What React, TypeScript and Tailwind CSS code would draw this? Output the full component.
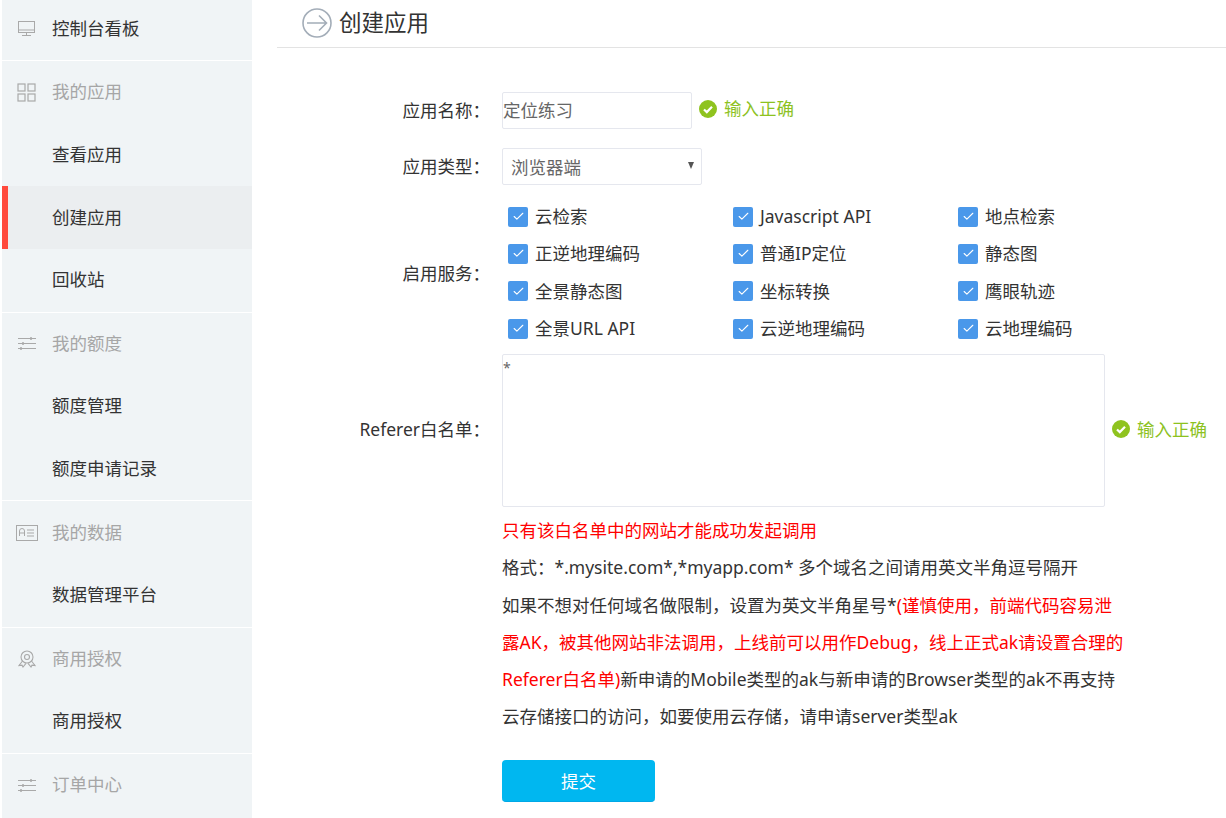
import { Check } from "lucide-react";
import type { ReactNode } from "react";

const FONT = "font-['Noto_Sans','Noto_Sans_CJK_SC',sans-serif]";

const MonitorIcon = () => (
  <svg width="18" height="16" viewBox="0 0 18 16" fill="none" stroke="#a9a9a9" strokeWidth="1">
    <rect x="0.5" y="0.5" width="16" height="11" />
    <path d="M1 9h15M4 14.5h9M8.5 12v2" />
  </svg>
);

const GridIcon = () => (
  <svg width="20" height="19" viewBox="0 0 20 19" fill="none" stroke="#a9a9a9" strokeWidth="1.2">
    <rect x="1" y="1" width="7" height="7" />
    <rect x="11" y="1" width="7" height="7" />
    <rect x="1" y="11" width="7" height="7" />
    <rect x="11" y="11" width="7" height="7" />
  </svg>
);

const SlidersIcon = () => (
  <svg width="18" height="15" viewBox="0 0 18 15" fill="none" stroke="#a9a9a9" strokeWidth="1">
    <path d="M0 2.5h18M0 7.5h18M0 12.5h18" />
    <path d="M13 1v3M5 6v3M3 11v3" strokeWidth="1.5" />
  </svg>
);

const CardIcon = () => (
  <svg width="22" height="16" viewBox="0 0 22 16" fill="none" stroke="#a9a9a9" strokeWidth="1">
    <rect x="0.5" y="0.5" width="21" height="15" />
    <path d="M3.5 11v-5q0-2.5 2.5-2.5t2.5 2.5v5M3.5 8h5M11 5h7M11 8h7M11 11h7" />
  </svg>
);

const BadgeIcon = () => (
  <svg width="18" height="18" viewBox="0 0 18 18" fill="none" stroke="#a9a9a9" strokeWidth="1.1">
    <circle cx="9" cy="7" r="6" />
    <circle cx="9" cy="7" r="2.5" />
    <path d="M4.5 11 1 15.5l3-.3 1 1.8 3-3.6M13.5 11l3.5 4.5-3-.3-1 1.8-3-3.6" />
  </svg>
);

const SideRow = ({
  label,
  icon,
  active,
  dark,
}: {
  label: string;
  icon?: ReactNode;
  active?: boolean;
  dark?: boolean;
}) => {
  return (
    <div
      className={`relative flex h-[62.6px] items-center text-[17.5px] ${
        icon && !dark ? "text-[#a6a6a6]" : "text-[#333]"
      } ${active ? "bg-[#ebeef0]" : ""}`}
    >
      {active && <span className="absolute left-0 top-0 h-full w-1.5 bg-[#ff4a3d]" />}
      {icon && <span className="absolute left-[14px] flex w-[22px] justify-center">{icon}</span>}
      <span className="pb-0.5 pl-[50px]">{label}</span>
    </div>
  );
};

const Divider = () => <div className="h-px bg-white" />;

const Sidebar = () => (
  <aside className="ml-0.5 h-[818px] w-[250px] shrink-0 overflow-hidden bg-[#f0f4f6]">
    <div className="-mt-[2.3px]">
      <SideRow label="控制台看板" icon={<MonitorIcon />} dark />
      <Divider />
      <SideRow label="我的应用" icon={<GridIcon />} />
      <SideRow label="查看应用" />
      <SideRow label="创建应用" active />
      <SideRow label="回收站" />
      <Divider />
      <SideRow label="我的额度" icon={<SlidersIcon />} />
      <SideRow label="额度管理" />
      <SideRow label="额度申请记录" />
      <Divider />
      <SideRow label="我的数据" icon={<CardIcon />} />
      <SideRow label="数据管理平台" />
      <Divider />
      <SideRow label="商用授权" icon={<BadgeIcon />} />
      <SideRow label="商用授权" />
      <Divider />
      <SideRow label="订单中心" icon={<SlidersIcon />} />
    </div>
  </aside>
);

const OkTip = ({ className = "" }: { className?: string }) => (
  <span className={`flex items-center gap-[7px] text-[17.5px] text-[#8dc21f] ${className}`}>
    <svg width="18" height="18" viewBox="0 0 18 18">
      <circle cx="9" cy="9" r="9" fill="#8fc31f" />
      <path d="M5 9.5l2.8 2.6L13 6.8" fill="none" stroke="#fff" strokeWidth="2.2" />
    </svg>
    输入正确
  </span>
);

const services = [
  "云检索",
  "Javascript API",
  "地点检索",
  "正逆地理编码",
  "普通IP定位",
  "静态图",
  "全景静态图",
  "坐标转换",
  "鹰眼轨迹",
  "全景URL API",
  "云逆地理编码",
  "云地理编码",
];

const Service = ({ label }: { label: string }) => (
  <div className="flex h-[37.3px] items-center gap-[7px] text-[17.5px] text-[#333]">
    <span className="flex h-5 w-5 items-center justify-center rounded-[2px] bg-[#4a98ea]">
      <Check size={13} color="#fff" strokeWidth={2} />
    </span>
    <span className="pb-px">{label}</span>
  </div>
);

const Label = ({ children, className = "" }: { children: ReactNode; className?: string }) => (
  <div className={`w-[225px] shrink-0 pr-3 text-right text-[17.5px] text-[#333] ${className}`}>{children}</div>
);

export default function App() {
  return (
    <div className={`flex h-[818px] w-[1226px] overflow-hidden bg-white ${FONT}`}>
      <Sidebar />
      <main className="ml-[25px] flex-1">
        <header className="flex h-12 items-center gap-[7px] border-b border-[#e3e3e3] pb-0.5 pl-[25px]">
          <svg width="30" height="30" viewBox="0 0 30 30" fill="none" stroke="#a3adb8" strokeWidth="1.6">
            <circle cx="15" cy="15" r="14" />
            <path d="M5 15h19M17 7.5l7.5 7.5-7.5 7.5" />
          </svg>
          <h1 className="text-[22.5px] font-normal text-[#333]">创建应用</h1>
        </header>

        <div className="mt-[44px] flex items-center">
          <Label>应用名称&#xFF1A;</Label>
          <input
            readOnly
            value="定位练习"
            className="h-[37px] w-[190px] rounded-[2px] border border-[#e5e7ee] pb-0.5 text-[17.5px] text-[#666] outline-none"
          />
          <OkTip className="ml-[7px] -mt-1" />
        </div>

        <div className="mt-[19px] flex items-center">
          <Label>应用类型&#xFF1A;</Label>
          <div className="relative flex h-[37px] w-[200px] items-center rounded-[2px] border border-[#e5e7ee] pl-2 pt-0.5 text-[17.5px] text-[#666]">
            浏览器端
            <span className="absolute right-[7px] top-[13px] h-0 w-0 border-x-[3.5px] border-t-[7px] border-x-transparent border-t-[#555]" />
          </div>
        </div>

        <div className="mt-[13px] flex items-center">
          <Label className="pt-0.5">启用服务&#xFF1A;</Label>
          <div className="ml-[6px] grid w-[675px] grid-cols-3">
            {services.map((s) => (
              <Service key={s} label={s} />
            ))}
          </div>
        </div>

        <div className="mt-[7px] flex items-center">
          <Label className="pb-[3px]">Referer白名单&#xFF1A;</Label>
          <div className="h-[153px] w-[603px] rounded-[2px] border border-[#e5e7ee] text-[14px] leading-[26px] text-[#666]">
            *
          </div>
          <OkTip className="ml-[7px] pb-[3px]" />
        </div>

        <div className="mt-[5px] ml-[225px] whitespace-nowrap text-[17.5px] leading-[37.2px] text-[#333]">
          <p className="text-[#f00]">只有该白名单中的网站才能成功发起调用</p>
          <p>格式&#xFF1A;*.mysite.com*,*myapp.com* 多个域名之间请用英文半角逗号隔开</p>
          <p>
            如果不想对任何域名做限制&#xFF0C;设置为英文半角星号*
            <span className="text-[#f00]">(谨慎使用&#xFF0C;前端代码容易泄</span>
          </p>
          <p className="text-[#f00]">露AK&#xFF0C;被其他网站非法调用&#xFF0C;上线前可以用作Debug&#xFF0C;线上正式ak请设置合理的</p>
          <p>
            <span className="text-[#f00]">Referer白名单)</span>
            新申请的Mobile类型的ak与新申请的Browser类型的ak不再支持
          </p>
          <p>云存储接口的访问&#xFF0C;如要使用云存储&#xFF0C;请申请server类型ak</p>
        </div>

        <button className="mt-[25px] ml-[225px] h-[42px] w-[153px] rounded-[4px] border-b border-[#00a8e6] bg-[#00b7f0] text-[17.5px] text-white">
          提交
        </button>
      </main>
    </div>
  );
}
